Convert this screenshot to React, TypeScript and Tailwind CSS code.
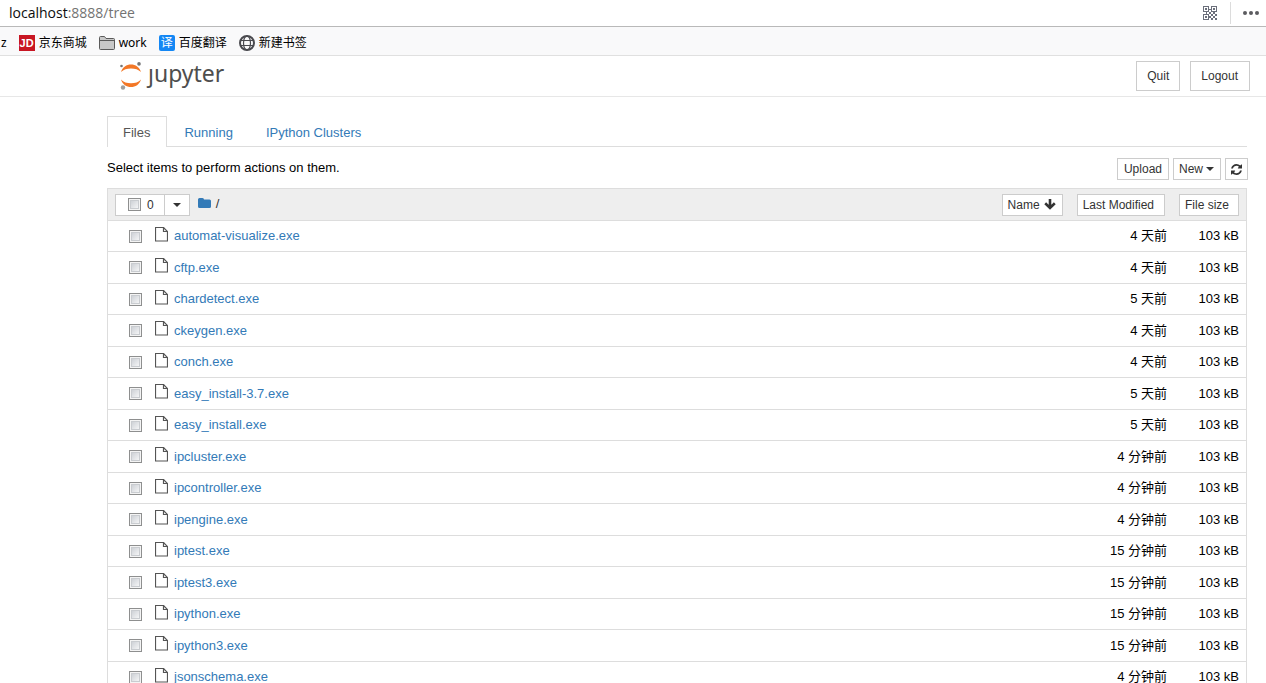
import React from 'react';

const files = [
  { name: 'automat-visualize.exe', modified: '4 天前', size: '103 kB' },
  { name: 'cftp.exe', modified: '4 天前', size: '103 kB' },
  { name: 'chardetect.exe', modified: '5 天前', size: '103 kB' },
  { name: 'ckeygen.exe', modified: '4 天前', size: '103 kB' },
  { name: 'conch.exe', modified: '4 天前', size: '103 kB' },
  { name: 'easy_install-3.7.exe', modified: '5 天前', size: '103 kB' },
  { name: 'easy_install.exe', modified: '5 天前', size: '103 kB' },
  { name: 'ipcluster.exe', modified: '4 分钟前', size: '103 kB' },
  { name: 'ipcontroller.exe', modified: '4 分钟前', size: '103 kB' },
  { name: 'ipengine.exe', modified: '4 分钟前', size: '103 kB' },
  { name: 'iptest.exe', modified: '15 分钟前', size: '103 kB' },
  { name: 'iptest3.exe', modified: '15 分钟前', size: '103 kB' },
  { name: 'ipython.exe', modified: '15 分钟前', size: '103 kB' },
  { name: 'ipython3.exe', modified: '15 分钟前', size: '103 kB' },
  { name: 'jsonschema.exe', modified: '4 分钟前', size: '103 kB' },
];

const checkboxClass =
  'block size-[13px] shrink-0 appearance-none border border-[#8e8f8f] bg-linear-to-br from-[#c4c8ce] to-[#ffffff] shadow-[inset_0_0_0_1px_#f4f4f4,inset_0_0_0_2px_#c9ccd0]';

const smallButton =
  'flex h-[22px] items-center border border-[#ccc] bg-white text-[12px] leading-[18px] text-[#333]';

const Caret: React.FC = () => (
  <svg width="8" height="4" viewBox="0 0 8 4" className="shrink-0" aria-hidden="true">
    <path d="M0 0h8L4 4z" fill="#333" />
  </svg>
);

const QrIcon: React.FC = () => (
  <svg width="14" height="14" viewBox="0 0 14 14" fill="#6b6f7b" shapeRendering="crispEdges" aria-hidden="true">
    <path
      fillRule="evenodd"
      d="M0 0h6v6H0zM1 1v4h4V1zM8 0h6v6H8zM9 1v4h4V1zM0 8h6v6H0zM1 9v4h4V9z"
    />
    <path d="M2 2h2v2H2zM10 2h2v2h-2zM2 10h2v2H2zM6 3h2v1H6zM3 6h1v2H3zM6 6h2v2H6zM8 8h2v2H8zM10 6h2v2h-2zM12 8h2v2h-2zM10 10h2v2h-2zM8 12h2v2H8zM12 12h2v2h-2zM6 10h2v2H6z" />
  </svg>
);

const FolderOutline: React.FC = () => (
  <svg width="16" height="14" viewBox="0 0 16 14" aria-hidden="true">
    <path d="M.5 12.500V1.500a1 1 0 0 1 1-1h4l1.500 2h7.500a1 1 0 0 1 1 1v9a1 1 0 0 1-1 1h-13a1 1 0 0 1-1-1z" fill="#c8c8c8" stroke="#5a5a5a" />
    <path d="M1 4.500h14" fill="none" stroke="#5a5a5a" />
  </svg>
);

const GlobeIcon: React.FC = () => (
  <svg width="16" height="16" viewBox="0 0 16 16" fill="none" stroke="#4a4a4f" aria-hidden="true">
    <circle cx="8" cy="8" r="7" strokeWidth="2" />
    <ellipse cx="8" cy="8" rx="3.500" ry="7" strokeWidth="1.200" />
    <path d="M1.500 5.500h13M1.500 10.500h13" strokeWidth="1.200" />
  </svg>
);

const JupyterMark: React.FC = () => (
  <svg width="24" height="28" viewBox="0 0 24 28" aria-hidden="true">
    <path d="M2 10C3.500 5 7.500 2.500 12 2.500s8.500 2.500 10 7.500C19.500 7.500 16 6.500 12 6.500S4.500 7.500 2 10z" fill="#f37726" />
    <path d="M2 17.500C3.500 22.500 7.500 25 12 25s8.500-2.500 10-7.500c-2.500 2.800-6 3.700-10 3.700s-7.500-.9-10-3.700z" fill="#f37726" />
    <circle cx="2.500" cy="4" r="1.300" fill="#767677" />
    <circle cx="20" cy="1.900" r="1.800" fill="#767677" />
    <circle cx="4" cy="25.500" r="2.200" fill="#9e9e9e" />
  </svg>
);

const FileIcon: React.FC = () => (
  <svg width="13" height="15" viewBox="0 0 13 15" fill="none" stroke="#555" aria-hidden="true">
    <path d="M.5.5h8l4 4v9.500H.5z" strokeWidth="1.200" />
    <path d="M8.500.5v4h4" strokeWidth="1.200" />
  </svg>
);

const RefreshIcon: React.FC = () => (
  <svg width="11" height="11" viewBox="0 0 1536 1536" fill="#333" aria-hidden="true">
    <path d="M1511 928q0 5-1 7-64 268-268 434.500T764 1536q-146 0-282.500-55T238 1324l-129 129q-19 19-45 19t-45-19-19-45V960q0-26 19-45t45-19h448q26 0 45 19t19 45-19 45l-137 137q71 66 161 102t187 36q134 0 250-65t186-179q11-17 53-117 8-23 30-23h192q13 0 22.500 9.500t9.500 22.500zm25-800v448q0 26-19 45t-45 19h-448q-26 0-45-19t-19-45 19-45l138-138Q969 256 768 256q-134 0-250 65T332 500q-11 17-53 117-8 23-30 23H50q-13 0-22.500-9.500T18 608v-7q65-268 270-434.500T768 0q146 0 284 55.500T1297 212l130-129q19-19 45-19t45 19 19 45z" />
  </svg>
);

const ArrowDown: React.FC = () => (
  <svg width="12" height="11" viewBox="0 0 12 11" fill="none" stroke="#333" strokeWidth="2.600" aria-hidden="true">
    <path d="M6 0v9M1.200 4.300L6 8.900l4.800-4.600" />
  </svg>
);

const BrowserBar: React.FC = () => (
  <div>
    <div className="flex h-[27px] items-center border-b border-[#b9b9b9] bg-white pr-[7px] pl-[9px]">
      <div className="flex-1 font-['Open_Sans','Noto_Sans',sans-serif] text-[14px] leading-5 text-[#737373]">
        <span className="text-[#0c0c0d]">localhost</span>:8888/tree
      </div>
      <button type="button" aria-label="QR code" className="mr-[13px]">
        <QrIcon />
      </button>
      <div className="mr-[12px] h-[22px] w-px bg-[#dcdcdc]" />
      <button type="button" aria-label="Page actions" className="flex gap-[2px]">
        <span className="size-1 rounded-full bg-[#5b5b5f]" />
        <span className="size-1 rounded-full bg-[#5b5b5f]" />
        <span className="size-1 rounded-full bg-[#5b5b5f]" />
      </button>
    </div>
    <nav className="flex h-[29px] items-center gap-3 border-b border-[#e0e0e0] bg-[#f9f9fa] pt-[3px] pl-px font-['Noto_Sans','Noto_Sans_CJK_SC',sans-serif] text-[12px] leading-4 text-black">
      <a href="#z">z</a>
      <a href="#jd" className="flex items-center gap-1">
        <span className="flex size-4 items-center justify-center bg-[#c81623] font-['Liberation_Sans',sans-serif] text-[11px] font-bold text-white">JD</span>
        京东商城
      </a>
      <a href="#work" className="flex items-center gap-1">
        <FolderOutline />
        work
      </a>
      <a href="#fanyi" className="flex items-center gap-1">
        <span className="flex size-4 items-center justify-center rounded-xs bg-[#1487f4] text-[12px] text-white">译</span>
        百度翻译
      </a>
      <a href="#new" className="flex items-center gap-1">
        <GlobeIcon />
        新建书签
      </a>
    </nav>
  </div>
);

const Header: React.FC = () => (
  <header className="flex h-[41px] items-center border-b border-[#e7e7e7] pr-4 pl-[119px]">
    <a href="#home" aria-label="jupyter" className="flex flex-1 items-center gap-[5px]">
      <JupyterMark />
      <span className="pb-[6px] font-['Noto_Sans','Open_Sans',sans-serif] text-[23px] leading-7 text-[#4e4e4e]">ȷupyter</span>
    </a>
    <div className="flex gap-[10px] text-[12px] text-[#333]">
      <button type="button" className="h-[30px] border border-[#ccc] bg-white px-[10px]">Quit</button>
      <button type="button" className="h-[30px] border border-[#ccc] bg-white pr-[11px] pl-[10px]">Logout</button>
    </div>
  </header>
);

const Tabs: React.FC = () => (
  <nav className="mt-[19px] flex h-[31px] border-b border-[#ddd] leading-8">
    <a href="#files" className="-mb-px h-[31px] border border-b-0 border-[#ddd] bg-white pr-4 pl-[15px] text-[#555]">Files</a>
    <a href="#running" className="ml-px border border-transparent px-[15px] text-[#337ab7]">Running</a>
    <a href="#clusters" className="ml-px border border-transparent px-[15px] text-[#337ab7]">IPython Clusters</a>
  </nav>
);

const FileTable: React.FC = () => (
  <table className="mt-2 w-full border-separate border-spacing-0 border-x border-t border-[#ddd]">
    <thead>
      <tr className="h-8 bg-[#eee]">
        <th className="border-b border-[#ddd] pl-[7px] font-normal">
          <div className="flex items-center">
            <label className="flex h-[22px] items-center gap-[6px] border border-[#ccc] bg-white pr-[10px] pl-3 text-[12px] text-[#333]">
              <input type="checkbox" className={checkboxClass} />
              0
            </label>
            <button type="button" aria-label="Select by type" className="-ml-px flex h-[22px] items-center border border-[#ccc] bg-white px-2">
              <Caret />
            </button>
            <a href="#root" aria-label="Root folder" className="ml-2 pb-[2px]">
              <svg width="13" height="11" viewBox="0 0 13 11" aria-hidden="true">
                <path d="M0 1.500Q0 0 1.500 0h3Q6 0 6 1.500h5.500Q13 1.500 13 3v5.500Q13 10 11.500 10h-10Q0 10 0 8.500z" fill="#337ab7" />
              </svg>
            </a>
            <span className="ml-[5px] pb-[2px] text-[#333]">/</span>
          </div>
        </th>
        <th className="border-b border-[#ddd] pr-[2px] font-normal">
          <div className="flex justify-end gap-[14px]">
            <button type="button" className={`${smallButton} gap-1 pr-[6px] pl-[5px]`}>
              Name
              <ArrowDown />
            </button>
            <button type="button" className={`${smallButton} pr-[10px] pl-[5px]`}>Last Modified</button>
          </div>
        </th>
        <th className="w-[79px] border-b border-[#ddd] pr-[7px] font-normal">
          <div className="flex justify-end">
            <button type="button" className={`${smallButton} pr-[9px] pl-[5px]`}>File size</button>
          </div>
        </th>
      </tr>
    </thead>
    <tbody>
      {files.map((file) => (
        <tr key={file.name} className="odd:h-[31px] even:h-8">
          <td className="border-b border-[#ddd] pl-[21px]">
            <div className="flex items-center">
              <input type="checkbox" aria-label={`Select ${file.name}`} className={checkboxClass} />
              <span className="mr-[6px] mb-1 ml-[13px]">
                <FileIcon />
              </span>
              <a href={`#${file.name}`} className="text-[#337ab7]">{file.name}</a>
            </div>
          </td>
          <td className="border-b border-[#ddd] text-right">{file.modified}</td>
          <td className="border-b border-[#ddd] pr-[7px] text-right">{file.size}</td>
        </tr>
      ))}
    </tbody>
  </table>
);

const App: React.FC = () => {
  return (
    <div className="h-screen overflow-hidden bg-white font-['Liberation_Sans','Noto_Sans_CJK_SC',sans-serif] text-[13px] leading-5 text-black">
      <BrowserBar />
      <Header />
      <main className="mr-[19px] ml-[107px]">
        <Tabs />
        <div className="-mr-px mt-[11px] flex items-start justify-between">
          <p>Select items to perform actions on them.</p>
          <div className="flex gap-1">
            <button type="button" className={`${smallButton} px-[6px]`}>Upload</button>
            <button type="button" className={`${smallButton} gap-[3px] pr-[6px] pl-[5px]`}>
              New
              <Caret />
            </button>
            <button type="button" aria-label="Refresh" className={`${smallButton} px-[5px]`}>
              <RefreshIcon />
            </button>
          </div>
        </div>
        <FileTable />
      </main>
    </div>
  );
};

export default App;
